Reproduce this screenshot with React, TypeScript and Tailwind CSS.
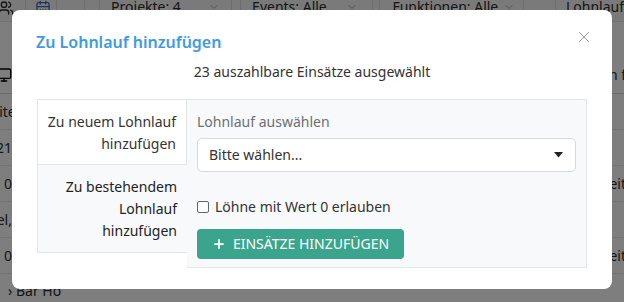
import { Plus, X, ChevronDown, Users, CalendarDays, Monitor } from "lucide-react"

const bgRows = [
  { left: "Bearbeiter", right: "" },
  { left: "2021", right: "" },
  { left: "0", right: "Arbeit" },
  { left: "Hotel,", right: "" },
  { left: "0", right: "Arbeit" },
]

function BackgroundPage() {
  return (
    <div className="flex h-full w-full flex-col bg-[#fcfdfd] text-[#2b2b2b]">
      {/* toolbar */}
      <div className="-mt-[12px] flex h-[34px] shrink-0 items-stretch border-b border-[#e1e3e5] bg-[#f4f5f6] text-[14px] leading-[18px]">
        <div className="flex w-[28px] items-center border-r border-[#d9dbdd] pt-[6px]">
          <Users className="-ml-[2px] h-4 w-4" />
        </div>
        <div className="flex w-[32px] items-center border-r border-[#d9dbdd] pl-[9px] pt-[6px]">
          <CalendarDays className="h-4 w-4 text-[#3b6fb6]" />
        </div>
        <div className="w-[30px] border-r border-[#d9dbdd]" />
        <div className="w-[16px] border-r border-[#d9dbdd]" />
        <div className="flex w-[139px] items-center justify-between border-r border-[#d9dbdd] pl-[11px] pr-[11px] pt-[5px]">
          <span>Projekte: 4</span>
          <ChevronDown className="h-3 w-3 text-[#aaa]" />
        </div>
        <div className="w-[10px] border-r border-[#d9dbdd]" />
        <div className="flex w-[139px] items-center justify-between border-r border-[#d9dbdd] pl-[11px] pr-[14px] pt-[5px]">
          <span>Events: Alle</span>
          <ChevronDown className="h-3 w-3 text-[#aaa]" />
        </div>
        <div className="w-[8px] border-r border-[#d9dbdd]" />
        <div className="flex w-[152px] items-center justify-between border-r border-[#d9dbdd] pl-[12px] pr-[8px] pt-[5px]">
          <span className="whitespace-nowrap">Funktionen: Alle</span>
          <ChevronDown className="h-3 w-3 text-[#aaa]" />
        </div>
        <div className="w-[34px] border-r border-[#d9dbdd]" />
        <div className="flex items-center whitespace-nowrap pl-[10px] pt-[5px]">Lohnlauf</div>
      </div>
      <div className="flex h-[72px] shrink-0 items-end justify-between border-b border-[#d0d2d4] pb-[8px] text-[14px]">
        <Monitor className="-ml-[4px] mb-[2px] h-4 w-4 text-black" />
        <span className="-mr-[2px] whitespace-nowrap">Lohn f</span>
      </div>
      {bgRows.map((r, i) => (
        <div key={i} className="flex h-[36px] shrink-0 items-center justify-between border-b border-[#e4e6e8] text-[14px]">
          <span className="-ml-[48px] w-[60px] text-right">{r.left}</span>
          <span className="-mr-[2px] text-right">{r.right}</span>
        </div>
      ))}
      <div className="pl-[8px] pt-[6px] text-[14px]">› Bar Ho</div>
    </div>
  )
}

export default function App() {
  return (
    <div className="relative h-[302px] w-[624px] overflow-hidden" style={{ fontFamily: '"Noto Sans", "Open Sans", sans-serif' }}>
      <BackgroundPage />
      <div className="absolute inset-0 bg-black/50" />
      <div className="absolute left-[12px] top-[10px] h-[279px] w-[600px] rounded-[8px] bg-white">
        <div className="flex items-start justify-between pl-[24px] pr-[19px] pt-[21px]">
          <h2 className="text-[16px] font-semibold leading-[22px] text-[#3c9be3]">Zu Lohnlauf hinzufügen</h2>
          <button className="mt-[-3px] text-[#9a9a9a]">
            <X className="h-[18px] w-[18px]" strokeWidth={1.3} />
          </button>
        </div>
        <div className="mt-[9px] text-center text-[14px] leading-[20px] text-[#333]">23 auszahlbare Einsätze ausgewählt</div>
        <div className="ml-[25px] mt-[17px] flex w-[550px] text-[14px] leading-[22px]">
          <div className="flex w-[150px] flex-col self-start border-b border-l border-t border-[#e3e5e8]">
            <div className="h-[65px] border-r border-b border-[#e3e5e8] bg-white pl-2 pr-[10px] pt-[11px] text-right text-[#333]">
              Zu neuem Lohnlauf hinzufügen
            </div>
            <div className="h-[87px] bg-[#f8f9fb] pl-2 pr-[10px] pt-[11px] text-right text-[#222]">
              Zu bestehendem Lohnlauf hinzufügen
            </div>
          </div>
          <div className="flex h-[169px] flex-1 flex-col border border-l-0 border-[#e3e5e8] bg-[#f8f9fb] px-[10px] pt-[11px]">
            <label className="leading-[22px] text-[#6c6f73]">Lohnlauf auswählen</label>
            <div className="mt-[5px] flex h-[34px] shrink-0 items-center justify-between rounded-[5px] border border-[#d7dadd] bg-white pl-[11px] pr-[12px] text-[#333]">
              <span>Bitte wählen...</span>
              <svg width="9" height="6" viewBox="0 0 9 6">
                <path d="M0 0h9L4.5 5.5z" fill="#222" />
              </svg>
            </div>
            <label className="mt-[24px] flex items-center gap-[6px] text-[#333]">
              <span className="h-[12px] w-[12px] rounded-[2px] border border-[#666] bg-white" />
              Löhne mit Wert 0 erlauben
            </label>
            <button className="mt-[11px] flex h-[30px] w-[207px] shrink-0 items-center justify-center gap-[7px] rounded-[4px] bg-[#3aa58c] text-[14px] text-white">
              <Plus className="h-[14px] w-[14px]" strokeWidth={3} />
              EINSÄTZE HINZUFÜGEN
            </button>
          </div>
        </div>
      </div>
    </div>
  )
}
